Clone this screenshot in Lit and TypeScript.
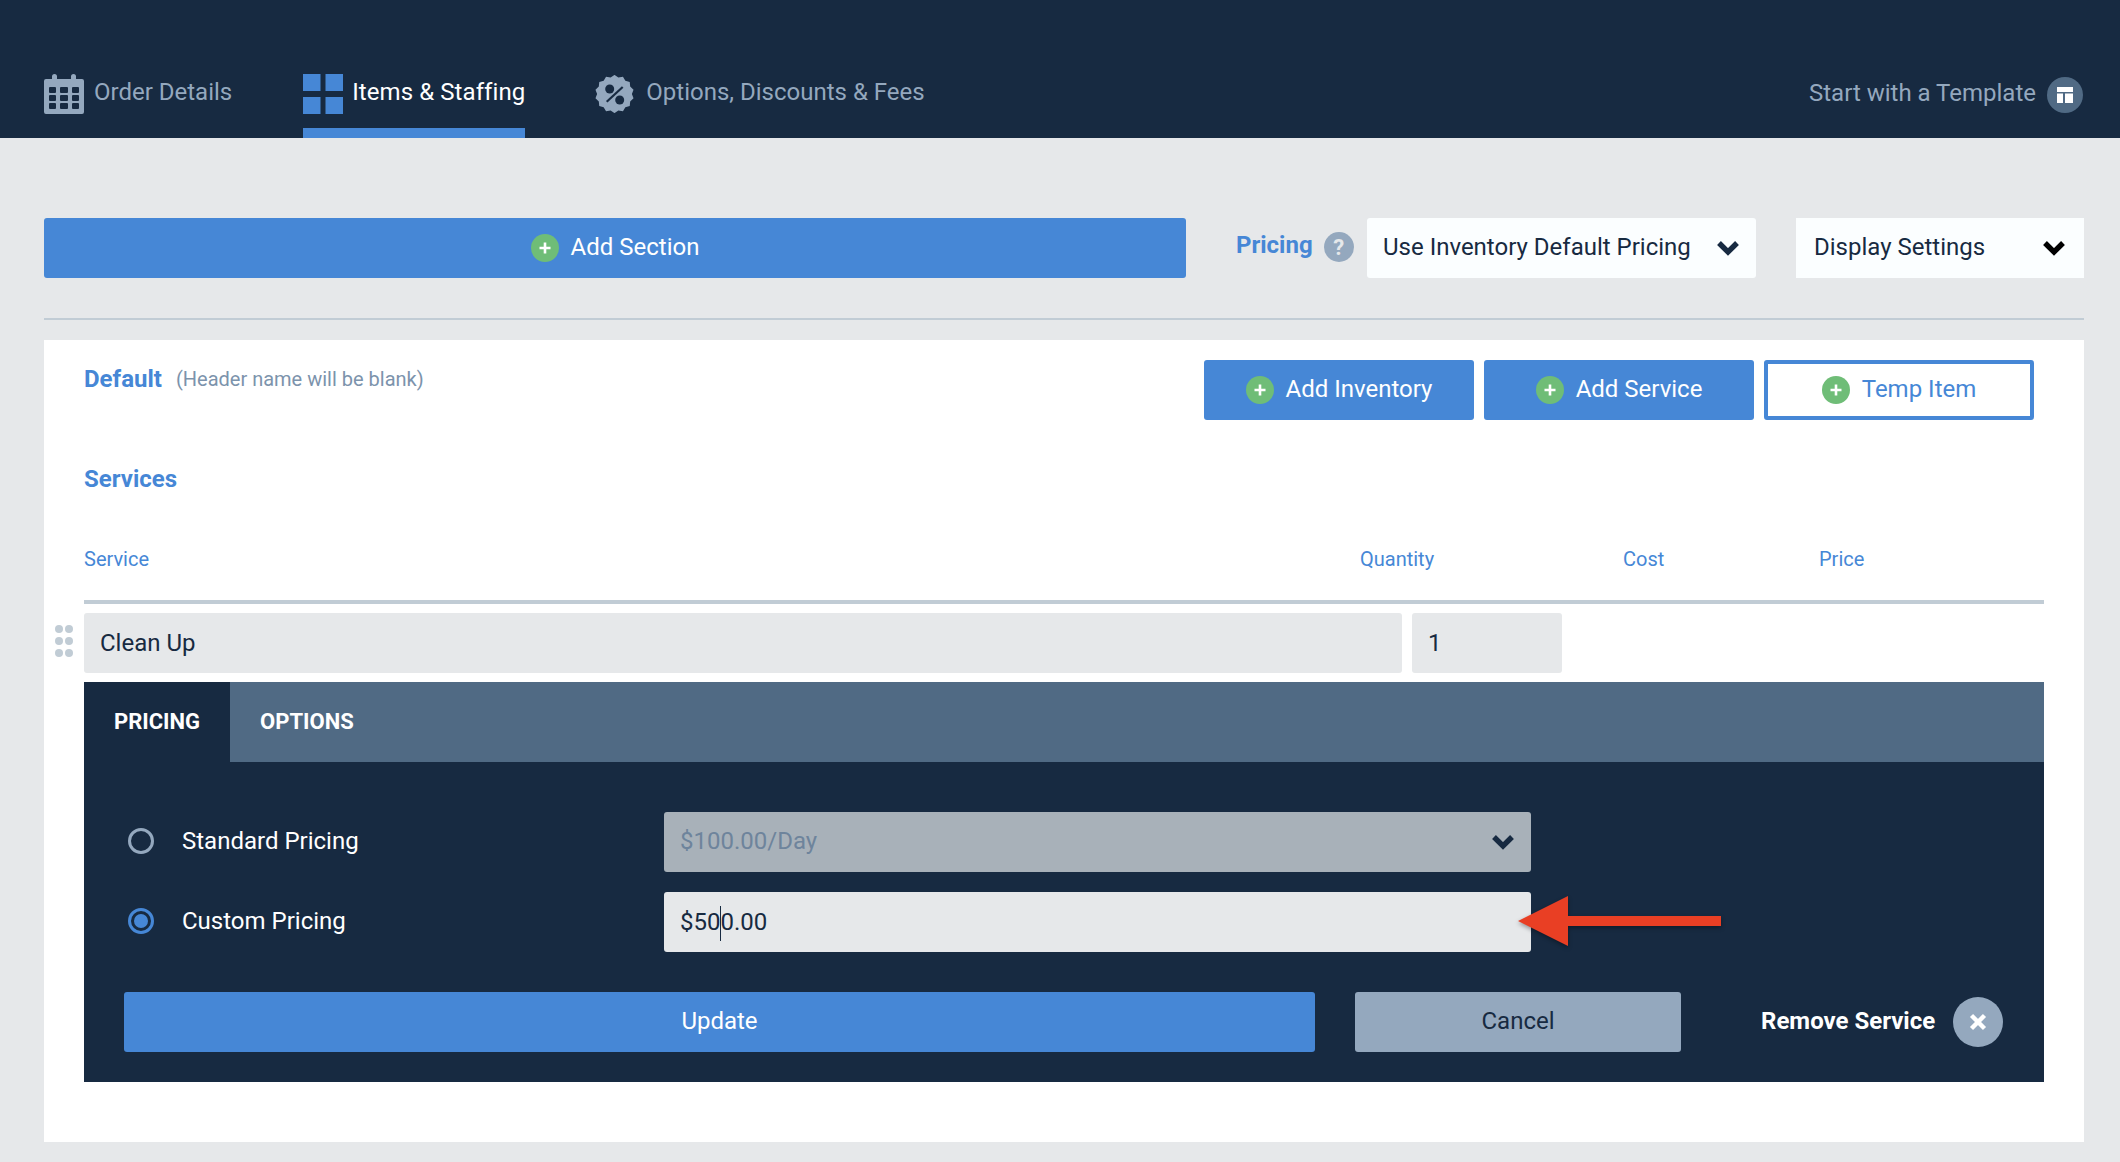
import { LitElement, html, css, svg } from 'lit';
import { customElement } from 'lit/decorators.js';

const chevron = svg`<svg class="chev" viewBox="0 0 24 16" width="24" height="16"><path d="M3 3l9 9 9-9" fill="none" stroke="currentColor" stroke-width="5.4"/></svg>`;
const plus = html`<span class="plus"><svg viewBox="0 0 14 14" width="14" height="14"><path d="M7 1.5v11M1.5 7h11" stroke="#fff" stroke-width="2.6" fill="none"/></svg></span>`;

const calendar = svg`<svg viewBox="0 0 40 40" width="40" height="40">
  <path fill="#94a8be" d="M2 5h6V2.5a2.5 2.5 0 0 1 5 0V5h14V2.5a2.5 2.5 0 0 1 5 0V5h6a2 2 0 0 1 2 2v31a2 2 0 0 1-2 2H2a2 2 0 0 1-2-2V7a2 2 0 0 1 2-2z"/>
  <g fill="#172a41">
    <rect x="5" y="13" width="7" height="6" rx="1"/><rect x="16" y="13" width="8" height="6" rx="1"/><rect x="28" y="13" width="7" height="6" rx="1"/>
    <rect x="5" y="21" width="7" height="6" rx="1"/><rect x="16" y="21" width="8" height="6" rx="1"/><rect x="28" y="21" width="7" height="6" rx="1"/>
    <rect x="5" y="29" width="7" height="6" rx="1"/><rect x="16" y="29" width="8" height="6" rx="1"/><rect x="28" y="29" width="7" height="6" rx="1"/>
  </g></svg>`;

const grid = svg`<svg viewBox="0 0 40 40" width="40" height="40" fill="#4687d6">
  <rect x="0" y="0" width="17.5" height="17"/><rect x="22.5" y="0" width="17.5" height="17"/>
  <rect x="0" y="23" width="17.5" height="17"/><rect x="22.5" y="23" width="17.5" height="17"/></svg>`;

// scalloped badge outline, 14 bumps
const badgePoints = Array.from({ length: 28 }, (_, i) => {
  const a = (i / 28) * Math.PI * 2 - Math.PI / 2;
  const r = i % 2 === 0 ? 19.5 : 17.4;
  return `${(19.5 + r * Math.cos(a)).toFixed(2)},${(19 + r * Math.sin(a) * 0.98).toFixed(2)}`;
}).join(' ');

const badge = svg`<svg class="badge" viewBox="0 0 39 38" width="39" height="38">
  <polygon fill="#94a8be" points="${badgePoints}"/>
  <circle cx="14.7" cy="14" r="4.5" fill="#172a41"/><circle cx="24.7" cy="25" r="4.5" fill="#172a41"/>
  <path d="M27.7 12L11.7 26.7" stroke="#172a41" stroke-width="2.2"/></svg>`;

const template = svg`<svg viewBox="0 0 16 16" width="16" height="16" fill="#fff">
  <rect x="0" y="0" width="16" height="5"/><rect x="0" y="6.5" width="6" height="9.5"/><rect x="8" y="6.5" width="8" height="9.5"/></svg>`;

@customElement('app-root')
export class AppRoot extends LitElement {
  static styles = css`
    :host {
      display: block;
      min-height: 1162px;
      background: #e6e8ea;
      font-family: Roboto, sans-serif;
      font-size: 24px;
      color: #172a41;
    }

    /* top bar */
    .topbar {
      height: 138px;
      box-sizing: border-box;
      background: #172a41;
      padding: 0 37px 0 44px;
      display: flex;
      justify-content: space-between;
      align-items: flex-end;
    }
    .tabs { display: flex; gap: 71px; }
    .tab {
      height: 64px;
      box-sizing: border-box;
      border-bottom: 10px solid transparent;
      display: flex;
      gap: 10px;
      color: #94a8be;
      line-height: 36px;
    }
    .tab svg { flex: none; }
    .tab.on { color: #fff; border-bottom-color: #4687d6; gap: 9px; letter-spacing: .08px; }
    .tab.pct { gap: 12px; }
    .badge { margin: 1px 0 0 -1px; }
    .template {
      display: flex;
      align-items: center;
      gap: 11px;
      margin-bottom: 25px;
      color: #94a8be;
    }
    .template span { margin-top: -5px; }
    .template i {
      width: 36px;
      height: 36px;
      border-radius: 50%;
      background: #506a84;
      display: flex;
      align-items: center;
      justify-content: center;
    }

    /* page */
    .page { padding: 80px 36px 20px 44px; }
    .toolbar { display: flex; height: 60px; align-items: stretch; }
    .btn {
      height: 60px;
      box-sizing: border-box;
      border: none;
      border-radius: 3px;
      background: #4687d6;
      color: #fff;
      display: flex;
      align-items: center;
      justify-content: center;
      gap: 12px;
      font: inherit;
    }
    .btn > span:not(.plus), .select > span { margin-top: -2px; }
    .plus {
      width: 28px;
      height: 28px;
      border-radius: 50%;
      background: #6fbd77;
      display: flex;
      align-items: center;
      justify-content: center;
      flex: none;
    }
    .add-section { width: 1142px; }
    .pricing-label {
      margin-left: 50px;
      display: flex;
      align-items: center;
      gap: 11px;
      font-weight: 700;
      color: #4687d6;
      width: 131px;
    }
    .pricing-label > span:first-child { margin-top: -6px; }
    .help {
      width: 30px;
      height: 30px;
      border-radius: 50%;
      background: #94a8be;
      color: #e6e8ea;
      display: flex;
      align-items: center;
      justify-content: center;
      font-size: 22px;
      margin-top: -2px;
    }
    .select {
      background: #fbfeff;
      border-radius: 3px;
      height: 60px;
      box-sizing: border-box;
      display: flex;
      align-items: center;
      justify-content: space-between;
      padding: 0 16px;
    }
    .pricing-select { width: 389px; }
    .display-select { width: 288px; margin-left: 40px; padding: 0 18px 0 18px; border-radius: 0; }
    .display-select .chev { color: #000; }

    .divider { height: 2px; background: #c1ccd5; margin-top: 40px; }

    /* card */
    .card {
      margin-top: 20px;
      height: 802px;
      box-sizing: border-box;
      background: #fff;
      padding: 20px 40px 0;
    }
    .card-head { display: flex; justify-content: space-between; padding-right: 10px; }
    .title { display: flex; gap: 14px; align-items: flex-start; margin-top: 4px; }
    h2 { margin: 0; font: 700 24px/30px Roboto, sans-serif; color: #4687d6; }
    .title small { font-size: 20px; line-height: 30px; color: #7c93ac; }
    .actions { display: flex; gap: 10px; }
    .actions .btn { width: 270px; }
    .btn.outline { background: #fff; border: 4px solid #4687d6; color: #4687d6; }
    .services { margin-top: 44px; }

    .cols {
      display: grid;
      grid-template-columns: 1276px 263px 196px 1fr;
      margin-top: 50px;
      height: 56px;
      border-bottom: 4px solid #c1ccd5;
      font-size: 20px;
      line-height: 30px;
      color: #4687d6;
    }

    .row { display: flex; margin-top: 9px; margin-left: -29px; align-items: center; }
    .drag {
      width: 18px;
      margin: -4px 11px 0 0;
      display: grid;
      grid-template-columns: 8px 8px;
      gap: 4px 2px;
    }
    .drag i { width: 8px; height: 8px; border-radius: 50%; background: #c1ccd5; }
    .input {
      height: 60px;
      box-sizing: border-box;
      background: #e6e8ea;
      border-radius: 3px;
      padding: 0 16px;
      display: flex;
      align-items: center;
    }
    .name { width: 1318px; }
    .qty { width: 150px; margin-left: 10px; }

    /* pricing panel */
    .panel { margin-top: 9px; background: #172a41; color: #fff; }
    .panel-tabs { display: flex; height: 80px; background: #506a84; font-weight: 700; font-size: 22px; }
    .panel-tabs div { padding: 0 30px 2px; display: flex; align-items: center; }
    .panel-tabs .on { background: #172a41; }
    .panel-body { padding: 50px 40px 30px; display: grid; gap: 20px; }
    .option { display: grid; grid-template-columns: 540px 867px; align-items: center; }
    .radio-label { display: flex; align-items: center; gap: 28px; padding: 0 0 3px 4px; }
    .radio {
      width: 26px;
      height: 26px;
      box-sizing: border-box;
      border-radius: 50%;
      border: 3px solid #94a8be;
      display: flex;
      align-items: center;
      justify-content: center;
    }
    .radio.on { border-color: #4687d6; }
    .radio.on::after { content: ''; width: 14px; height: 14px; border-radius: 50%; background: #4687d6; }
    .field { color: #172a41; position: relative; }
    .field > span { margin-top: 2px; }
    .field.off { background: #a8b1b9; color: #6e849c; justify-content: space-between; }
    .field.off > span { margin-top: -2px; }
    .field.off .chev { color: #172a41; width: 24px; }
    .caret {
      display: inline-block;
      width: 1px;
      height: 35px;
      margin-right: -1px;
      background: #172a41;
      vertical-align: middle;
    }
    .arrow { position: absolute; left: 854px; top: 4px; overflow: visible; filter: drop-shadow(0 2px 2px rgba(0,0,0,.35)); }
    .buttons { display: flex; margin-top: 20px; align-items: center; }
    .update { width: 1191px; }
    .cancel { width: 326px; margin-left: 40px; background: #94a8be; color: #172a41; }
    .remove { margin-left: 80px; display: flex; align-items: center; gap: 18px; font-weight: 700; }
    .remove span { margin-top: -3px; }
    .remove i {
      width: 50px;
      height: 50px;
      border-radius: 50%;
      background: #94a8be;
      display: flex;
      align-items: center;
      justify-content: center;
    }
  `;

  render() {
    return html`
      <div class="topbar">
        <div class="tabs">
          <div class="tab">${calendar}<span>Order Details</span></div>
          <div class="tab on">${grid}<span>Items &amp; Staffing</span></div>
          <div class="tab pct">${badge}<span>Options, Discounts &amp; Fees</span></div>
        </div>
        <div class="template"><span>Start with a Template</span><i>${template}</i></div>
      </div>

      <div class="page">
        <div class="toolbar">
          <div class="btn add-section">${plus}<span>Add Section</span></div>
          <div class="pricing-label"><span>Pricing</span><span class="help">?</span></div>
          <div class="select pricing-select"><span>Use Inventory Default Pricing</span>${chevron}</div>
          <div class="select display-select"><span>Display Settings</span>${chevron}</div>
        </div>
        <div class="divider"></div>

        <div class="card">
          <div class="card-head">
            <div class="title"><h2>Default</h2><small>(Header name will be blank)</small></div>
            <div class="actions">
              <div class="btn">${plus}<span>Add Inventory</span></div>
              <div class="btn">${plus}<span>Add Service</span></div>
              <div class="btn outline">${plus}<span>Temp Item</span></div>
            </div>
          </div>
          <h2 class="services">Services</h2>
          <div class="cols"><span>Service</span><span>Quantity</span><span>Cost</span><span>Price</span></div>
          <div class="row">
            <div class="drag"><i></i><i></i><i></i><i></i><i></i><i></i></div>
            <div class="input name">Clean Up</div>
            <div class="input qty">1</div>
          </div>

          <div class="panel">
            <div class="panel-tabs"><div class="on">PRICING</div><div>OPTIONS</div></div>
            <div class="panel-body">
              <div class="option">
                <div class="radio-label"><span class="radio"></span>Standard Pricing</div>
                <div class="input field off"><span>$100.00/Day</span>${chevron}</div>
              </div>
              <div class="option">
                <div class="radio-label"><span class="radio on"></span>Custom Pricing</div>
                <div class="input field">
                  <span>$50<span class="caret"></span>0.00</span>
                  <svg class="arrow" width="204" height="52" viewBox="0 0 204 52">
                    <path fill="#e93f24" d="M0 25L50 0v20h153v10H50v20z"/>
                  </svg>
                </div>
              </div>
              <div class="buttons">
                <div class="btn update"><span>Update</span></div>
                <div class="btn cancel"><span>Cancel</span></div>
                <div class="remove"><span>Remove Service</span>
                  <i><svg width="18" height="18" viewBox="0 0 18 18"><path d="M2.5 2.5l13 13M15.5 2.5l-13 13" stroke="#fff" stroke-width="4.4" fill="none"/></svg></i>
                </div>
              </div>
            </div>
          </div>
        </div>
      </div>
    `;
  }
}
